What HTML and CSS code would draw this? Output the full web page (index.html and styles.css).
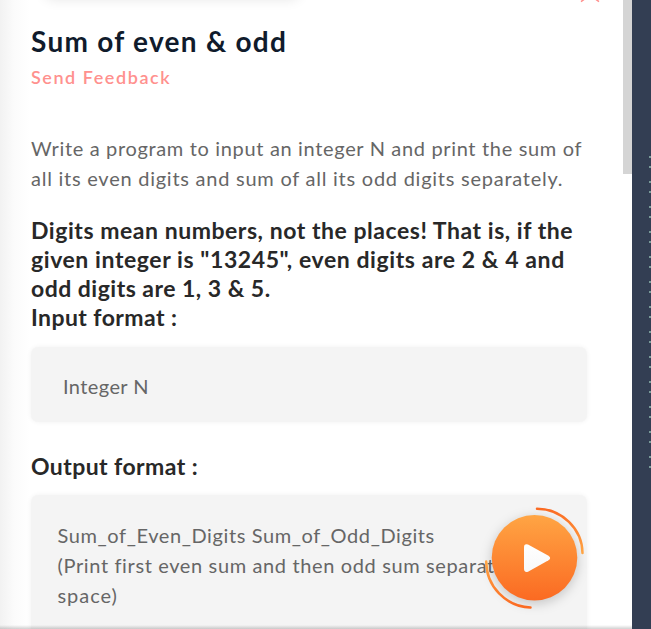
FILE: index.html
```html
<!DOCTYPE html>
<html lang="en">
<head>
<meta charset="utf-8">
<title>Sum of even &amp; odd</title>
<link rel="stylesheet" href="styles.css">
</head>
<body>
<div class="app">
  <main class="problem">
    <div class="top-card"></div>
    <svg class="bookmark" viewBox="0 0 20 4" width="20" height="4"><path d="M1 1.6 4.2-.7M19 1.6 15.8-.7" stroke="#ff8f8c" stroke-width="1.5" fill="none"/></svg>
    <h1 class="title">Sum of even &amp; odd</h1>
    <a class="feedback">Send Feedback</a>
    <p class="text intro"><span class="l1">Write a program to input an integer N and print the sum of</span><br><span class="l2">all its even digits and sum of all its odd digits separately.</span></p>
    <h2 class="heading note">Digits mean numbers, not the places! That is, if the<br><span class="n2">given integer is "13245", even digits are 2 &amp; 4 and</span><br><span class="n3">odd digits are 1, 3 &amp; 5.</span></h2>
    <h2 class="heading label">Input format :</h2>
    <div class="box box-in"><p class="text in">Integer N</p></div>
    <h2 class="heading label output-h">Output format :</h2>
    <div class="box box-out"><p class="text out">Sum_of_Even_Digits Sum_of_Odd_Digits<br><span class="o2">(Print first even sum and then odd sum separat</span><br><span class="o3">space)</span></p></div>
    <div class="scroll-thumb"></div>
    <div class="bottom-shade"></div>
    <svg class="play" viewBox="0 0 130 130" width="130" height="130">
      <defs>
        <linearGradient id="disc" x1="0" y1="0" x2="0" y2="1"><stop offset="0" stop-color="#ffa544"/><stop offset="1" stop-color="#fb6a22"/></linearGradient>
        <linearGradient id="arcTop" x1="0" y1="0" x2="0" y2="1"><stop offset="0" stop-color="#fb6a22"/><stop offset="1" stop-color="#ffa544"/></linearGradient>
        <linearGradient id="arcBottom" x1="0" y1="0" x2="0" y2="1"><stop offset="0" stop-color="#ffa544"/><stop offset="1" stop-color="#fb6a22"/></linearGradient>
        <linearGradient id="tri" x1="0" y1="0" x2="0" y2="1"><stop offset="0" stop-color="#fff"/><stop offset="1" stop-color="#f8f8f8"/></linearGradient>
      </defs>
      <circle class="disc" cx="64.5" cy="67.7" r="42.8" fill="url(#disc)"/>
      <path d="M67 18.7A46 45 0 0 1 112.5 63" fill="none" stroke="url(#arcTop)" stroke-width="2.5" stroke-linecap="round"/>
      <path d="M16.2 71.5A46 46 0 0 0 60.5 117.5" fill="none" stroke="url(#arcBottom)" stroke-width="2.5" stroke-linecap="round"/>
      <path d="M54 57.5Q54 53.2 58 54.5L78.5 65.7Q81.8 68 78.5 70.3L58 81.7Q54 83 54 78.5Z" fill="url(#tri)"/>
    </svg>
  </main>
  <aside class="editor"><div class="dots"></div></aside>
</div>
</body>
</html>
```
FILE: styles.css
```css
* { box-sizing: border-box; }
body { margin: 0; background: #fff; font-family: Lato, "Liberation Sans", sans-serif; }
.app { display: flex; width: 651px; height: 629px; overflow: hidden; }
.problem {
  position: relative; width: 632px; height: 629px; padding: 24px 44px 0 31px; overflow: hidden;
  background: linear-gradient(90deg, #f2f2f2, #fbfbfb 14px, #fff 30px);
}
p, h1, h2 { margin: 0; white-space: nowrap; }
.top-card { position: absolute; left: 45px; top: -20px; width: 254px; height: 18px; border-radius: 8px; box-shadow: 0 1px 13px rgba(0, 0, 0, .11); }
.bookmark { position: absolute; left: 580px; top: 0; }
.title { font-size: 28px; line-height: 34px; font-weight: 700; color: #101b2c; letter-spacing: 1.27px; }
.feedback { display: block; margin-top: 7px; font-size: 18px; line-height: 24px; font-weight: 600; color: #ff918e; letter-spacing: 1.55px; }
.text { font-size: 20px; line-height: 30px; color: #666; letter-spacing: .5px; }
.intro { margin-top: 44px; }
.l1 { letter-spacing: .66px; }
.l2 { letter-spacing: .75px; }
.in { letter-spacing: .4px; }
.out { letter-spacing: .6px; }
.o2 { letter-spacing: .63px; }
.o3 { letter-spacing: .95px; }
.heading { font-size: 23px; line-height: 29px; font-weight: 700; color: #282828; letter-spacing: .54px; }
.note { margin-top: 23px; }
.n2 { letter-spacing: .58px; }
.n3 { letter-spacing: .48px; }
.label { letter-spacing: .42px; }
.box { width: 556px; border-radius: 7px; background: #f4f4f4; box-shadow: 0 0 5px rgba(0, 0, 0, .06); }
.box-in { height: 75px; margin-top: 15px; padding: 24px 32px; }
.output-h { margin-top: 30px; }
.box-out { height: 160px; margin-top: 14px; padding: 25px 26.5px; }
.scroll-thumb { position: absolute; right: 0; top: 0; width: 9px; height: 174px; background: #d5d5d5; }
.bottom-shade { position: absolute; left: 0; right: 0; bottom: 0; height: 4px; background: linear-gradient(rgba(0, 0, 0, 0), rgba(0, 0, 0, .18)); }
.play { position: absolute; left: 470px; top: 490px; overflow: visible; }
.disc { filter: drop-shadow(0 3px 6px rgba(0, 0, 0, .2)); }
.editor { display: flex; justify-content: flex-end; width: 19px; height: 629px; padding-top: 156px; background: #333e53; }
.dots {
  width: 2px; height: 312px;
  background:
    radial-gradient(circle at 1px 1px, #789a98 1px, transparent 1.5px) 0 0 / 2px 25px,
    radial-gradient(circle at 1px 11px, #789a98 1px, transparent 1.5px) 0 0 / 2px 25px;
}
```
